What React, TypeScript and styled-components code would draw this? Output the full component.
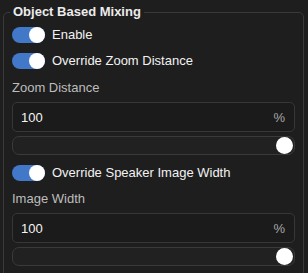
import styled, { createGlobalStyle } from 'styled-components';

const GlobalStyle = createGlobalStyle`
  html, body {
    margin: 0;
    padding: 0;
    background: #1e1e1e;
    font-family: 'Liberation Sans', Arial, sans-serif;
    color: #f2f2f2;
  }
`;

const Panel = styled.fieldset`
  margin: 4px 4px 0 3px;
  padding: 0 8px 20px 8px;
  border: 1px solid #3a3a3a;
  border-radius: 5px;
  display: flex;
  flex-direction: column;
`;

const Legend = styled.legend`
  margin-left: -2px;
  padding: 0 3px;
  font-size: 13px;
  line-height: 16px;
  font-weight: bold;
  color: #ececec;
`;

const ToggleRow = styled.label<{ $top: number }>`
  display: flex;
  align-items: center;
  gap: 7px;
  margin-top: ${(p) => p.$top}px;
  font-size: 13px;
  line-height: 16px;
  color: #f2f2f2;
`;

const Switch = styled.span<{ $on: boolean }>`
  width: 33px;
  height: 16px;
  border-radius: 8px;
  background: ${(p) => (p.$on ? '#4178c8' : '#555')};
  display: flex;
  justify-content: ${(p) => (p.$on ? 'flex-end' : 'flex-start')};
  flex-shrink: 0;

  &::after {
    content: '';
    width: 16px;
    height: 16px;
    border-radius: 50%;
    background: #fff;
  }
`;

const FieldLabel = styled.div<{ $top: number }>`
  margin-top: ${(p) => p.$top}px;
  font-size: 13px;
  line-height: 16px;
  color: #bdbdbd;
`;

const NumberBox = styled.div`
  margin-top: 6px;
  height: 28px;
  border: 1px solid #373737;
  border-radius: 5px;
  background: #1b1b1b;
  display: flex;
  align-items: center;
  justify-content: space-between;
  padding: 0 9px 0 8px;
  font-size: 13px;
  color: #f4f4f4;
`;

const Unit = styled.span`
  color: #a8a8a8;
`;

const Track = styled.div`
  margin-top: 4px;
  height: 17px;
  border: 1px solid #3a3a3a;
  border-radius: 7px;
  background: #212121;
  display: flex;
  align-items: center;
  justify-content: flex-end;
  padding: 0 1px;
`;

const Thumb = styled.span`
  width: 17px;
  height: 17px;
  border-radius: 50%;
  background: #fff;
`;

function Slider() {
  return (
    <Track>
      <Thumb />
    </Track>
  );
}

export default function App() {
  return (
    <>
      <GlobalStyle />
      <Panel>
        <Legend>Object Based Mixing</Legend>
        <ToggleRow $top={7}>
          <Switch $on />
          Enable
        </ToggleRow>
        <ToggleRow $top={10}>
          <Switch $on />
          Override Zoom Distance
        </ToggleRow>
        <FieldLabel $top={11}>Zoom Distance</FieldLabel>
        <NumberBox>
          100
          <Unit>%</Unit>
        </NumberBox>
        <Slider />
        <ToggleRow $top={10}>
          <Switch $on />
          Override Speaker Image Width
        </ToggleRow>
        <FieldLabel $top={10}>Image Width</FieldLabel>
        <NumberBox>
          100
          <Unit>%</Unit>
        </NumberBox>
        <Slider />
      </Panel>
    </>
  );
}
